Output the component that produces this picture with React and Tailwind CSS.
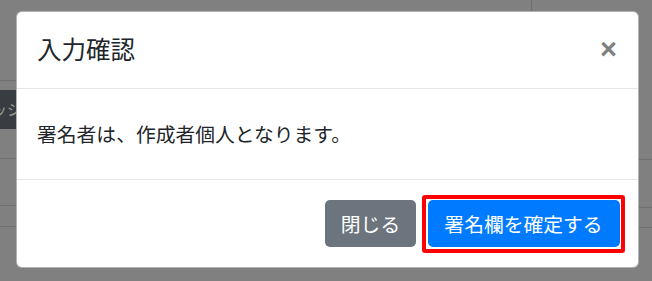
export default function App() {
  return (
    <div className="relative w-[652px] h-[281px] overflow-hidden bg-[#808080] font-['Noto_Sans_CJK_JP','Noto_Sans',sans-serif]">
      {/* page behind the backdrop */}
      <div className="flex h-full">
        <div className="w-[300px] flex flex-col">
          <div className="h-[81px] border-b border-[#6f6f6f]" />
          <div className="h-[9px]" />
          <div className="h-[39px] bg-[#393d42] flex items-center overflow-hidden">
            <span className="text-[15px] text-[#9a9a90] -ml-[8px] whitespace-nowrap">ッジ</span>
          </div>
          <div className="h-[30px] border-b border-[#6f6f6f]" />
          <div className="h-[47px] border-b border-[#6f6f6f]" />
          <div className="h-[21px] border-b border-[#6f6f6f]" />
        </div>
        <div className="flex-1 flex flex-col">
          <div className="h-[159px] flex">
            <div className="w-[231px]" />
            <div className="border-l border-[#6f6f6f]" />
          </div>
          <div className="h-[48px] border-t border-[#6f6f6f]" />
          <div className="h-[21px] border-t border-b border-[#6f6f6f]" />
        </div>
      </div>

      {/* modal */}
      <div className="absolute inset-0 pt-[11px] pl-[16px]">
        <div className="w-[623px] h-[257px] bg-white border border-black/30 rounded-[6px] flex flex-col text-[#212529]">
          <div className="h-[77px] border-b border-[#e5e7e9] flex items-center justify-between pl-[20px] pr-[21px]">
            <h5 className="text-[24.5px] leading-none font-normal -mt-[1px]">入力確認</h5>
            <span className="text-[29px] leading-none font-bold text-[#808080] font-['Liberation_Sans',sans-serif] -mt-[1px]">×</span>
          </div>
          <div className="h-[91px] border-b border-[#e5e7e9] flex items-center pl-[20px]">
            <p className="text-[19.8px] leading-none -mt-[1px]">署名者は、作成者個人となります。</p>
          </div>
          <div className="flex-1 flex items-center justify-end pr-[13px]">
            <button className="w-[91px] h-[47px] rounded-[5px] bg-[#6c757d] text-white text-[19.8px] leading-none">閉じる</button>
            <div className="ml-[6px] w-[203px] h-[58px] border-4 border-[#ff0000] rounded-[3px] flex items-center justify-center">
              <button className="w-[192px] h-[47px] rounded-[5px] bg-[#007bff] text-white text-[19.8px] leading-none">署名欄を確定する</button>
            </div>
          </div>
        </div>
      </div>
    </div>
  );
}
